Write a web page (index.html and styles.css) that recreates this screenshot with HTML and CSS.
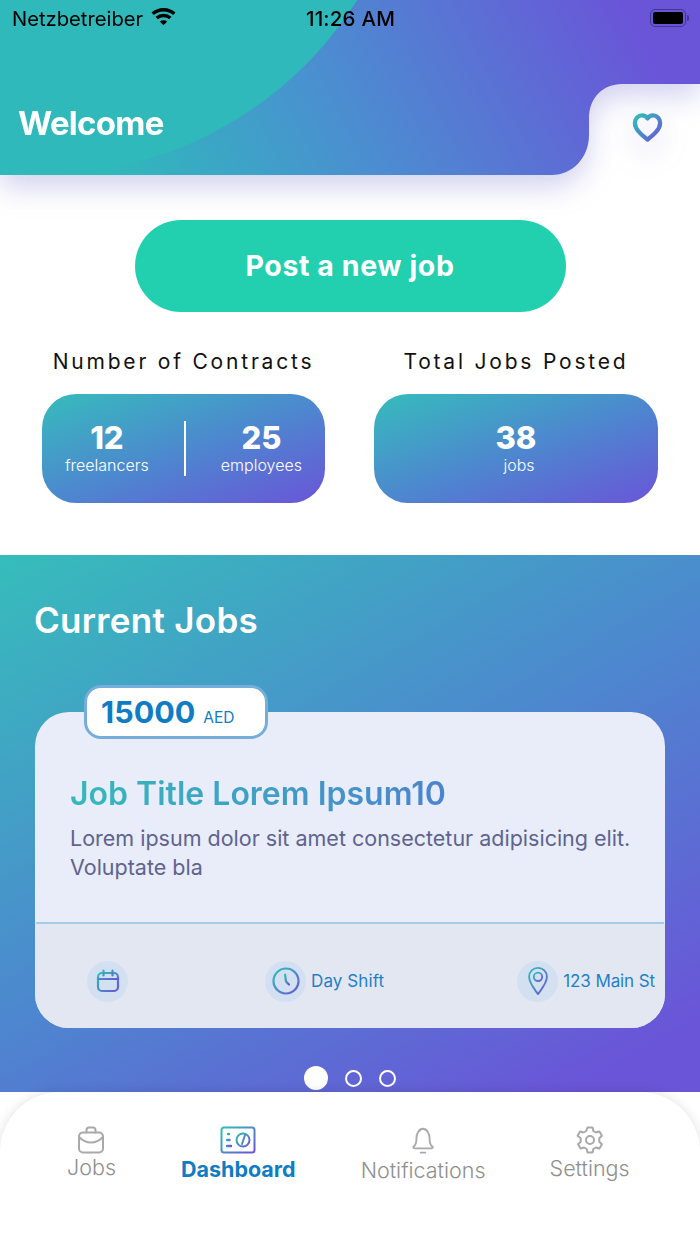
FILE: index.html
```html
<!DOCTYPE html>
<html lang="en">
<head>
<meta charset="utf-8">
<title>Dashboard</title>
<link rel="stylesheet" href="styles.css">
</head>
<body>
<svg class="defs" width="0" height="0" aria-hidden="true">
  <defs>
    <linearGradient id="brand" x1="0" y1="0" x2="1" y2="1">
      <stop offset="0" stop-color="#2fc0b8"/>
      <stop offset="1" stop-color="#6a55d8"/>
    </linearGradient>
  </defs>
</svg>
<div class="app">
  <div class="header-wrap">
    <header class="header">
      <div class="header-blob"></div>
      <div class="status">
        <div class="carrier">
          <span>Netzbetreiber</span>
          <svg class="wifi" viewBox="0 0 26 20" fill="none" stroke="#000" stroke-width="3.6" stroke-linecap="butt">
            <path d="M1.6 7.2C8 1.4 18 1.4 24.4 7.2"/>
            <path d="M5.8 11.6C9.8 8 16.2 8 20.2 11.6"/>
            <path d="M13 19.2l-3.9-3.9c2.2-1.8 5.6-1.8 7.8 0z" fill="#000" stroke="none"/>
          </svg>
        </div>
        <div class="clock">11:26 AM</div>
        <div class="battery-row">
          <div class="battery"><div class="battery-level"></div></div>
          <div class="battery-nub"></div>
        </div>
      </div>
      <h1 class="welcome">Welcome</h1>
    </header>
    <div class="fav">
      <svg class="heart" viewBox="0 0 32 32" fill="none" stroke="url(#brand)" stroke-width="4.4" stroke-linejoin="round">
        <path d="M16 28.5C9.5 23.2 3 18 3 11.3 3 6.6 6.5 3.5 10.3 3.5c2.5 0 4.4 1.1 5.7 3.2 1.3-2.1 3.2-3.2 5.7-3.2C25.500 3.500 29 6.600 29 11.300 29 18 22.500 23.200 16 28.500Z"/>
      </svg>
    </div>
  </div>

  <main class="summary">
    <button class="post-btn" type="button">Post a new job</button>
    <div class="stats">
      <div class="stat">
        <div class="stat-title">Number of Contracts</div>
        <div class="stat-card">
          <div class="metric"><b>12</b><span>freelancers</span></div>
          <div class="stat-rule"></div>
          <div class="metric"><b>25</b><span>employees</span></div>
        </div>
      </div>
      <div class="stat">
        <div class="stat-title">Total Jobs Posted</div>
        <div class="stat-card stat-card-single">
          <div class="metric"><b>38</b><span class="jobs-unit">jobs</span></div>
        </div>
      </div>
    </div>
  </main>

  <section class="jobs">
    <h2 class="jobs-title">Current Jobs</h2>
    <article class="job-card">
      <div class="price"><b>15000</b><span>AED</span></div>
      <div class="job-body">
        <h3 class="job-title">Job Title Lorem Ipsum10</h3>
        <p class="job-desc">Lorem ipsum dolor sit amet consectetur adipisicing elit. Voluptate bla</p>
      </div>
      <div class="job-rule"></div>
      <div class="job-foot">
        <div class="foot-item">
          <span class="foot-icon">
            <svg viewBox="0 0 26 26" fill="none" stroke="url(#brand)" stroke-width="2.2" stroke-linecap="round" stroke-linejoin="round" class="icon-cal">
              <rect x="3" y="5" width="20" height="18" rx="4"/><path d="M3 11h20M8.500 2.500v5M17.500 2.500v5"/>
            </svg>
          </span>
        </div>
        <div class="foot-item foot-item-shift">
          <span class="foot-icon">
            <svg viewBox="0 0 30 30" fill="none" stroke="url(#brand)" stroke-width="2.200" stroke-linecap="round" stroke-linejoin="round" class="icon-lg">
              <circle cx="15" cy="15" r="12.500"/><path d="M14 8.500l1 7 3 3"/>
            </svg>
          </span>
          <span class="foot-text">Day Shift</span>
        </div>
        <div class="foot-item">
          <span class="foot-icon">
            <svg viewBox="0 0 24 32" fill="none" stroke="url(#brand)" stroke-width="2" stroke-linejoin="round" class="icon-lg">
              <path d="M12 30C7 23 2.500 18 2.500 11.500 2.500 6 6.800 2 12 2s9.500 4 9.500 9.500C21.500 18 17 23 12 30Z"/><circle cx="12" cy="11.500" r="4.500"/>
            </svg>
          </span>
          <span class="foot-text foot-text-addr">123 Main St</span>
        </div>
      </div>
    </article>
    <div class="dots">
      <span class="dot dot-active"></span>
      <span class="dot"></span>
      <span class="dot"></span>
    </div>
  </section>

  <nav class="tabbar">
    <a class="tab">
      <svg class="tab-icon" viewBox="0 0 28 28" fill="none" stroke="#a9a9a9" stroke-width="2" stroke-linejoin="round" stroke-linecap="round">
        <rect x="2" y="6.500" width="24" height="20" rx="4"/><path d="M9.500 6.500V4c0-1.500 1-2.500 2.500-2.500h4c1.500 0 2.500 1 2.500 2.500v2.500M2 11c4 4 8 5.500 12 5.500S22 15 26 11"/>
      </svg>
      <span class="tab-label">Jobs</span>
    </a>
    <a class="tab tab-active">
      <svg class="tab-icon tab-icon-wide" viewBox="0 0 36 28" fill="none" stroke="url(#brand)" stroke-width="2" stroke-linecap="round">
        <rect x="1.500" y="1.500" width="33" height="25" rx="2.500"/>
        <circle cx="23" cy="14" r="6.500"/><path d="M25 9l-3 9"/>
        <path d="M8 8h1M7 14h2.500M7 20h4" stroke-width="2.400"/>
      </svg>
      <span class="tab-label">Dashboard</span>
    </a>
    <a class="tab tab-notif">
      <svg class="tab-icon" viewBox="0 0 28 30" fill="none" stroke="#a9a9a9" stroke-width="2" stroke-linejoin="round" stroke-linecap="round">
        <path d="M4 22c3-2 3-5 3-9 0-5 3-10 7-10s7 5 7 10c0 4 0 7 3 9 1 1 0 2-1 2H5c-1 0-2-1-1-2Z"/><path d="M11.500 28.500h5"/>
      </svg>
      <span class="tab-label">Notifications</span>
    </a>
    <a class="tab tab-settings">
      <svg class="tab-icon" viewBox="0 0 28 28" fill="none" stroke="#a9a9a9" stroke-width="2" stroke-linejoin="round">
        <path d="M11.500 1.500h5l.8 3.500 2.600 1.500 3.500-1 2.500 4.300-2.600 2.500v3.400l2.600 2.500-2.500 4.300-3.500-1-2.600 1.500-.8 3.500h-5l-.8-3.500-2.600-1.500-3.500 1-2.500-4.300 2.600-2.500v-3.400L1.600 9.800l2.500-4.300 3.500 1 2.600-1.500z"/>
        <circle cx="14" cy="14" r="4"/>
      </svg>
      <span class="tab-label">Settings</span>
    </a>
  </nav>
</div>
</body>
</html>
```
FILE: styles.css
```css
* { box-sizing: border-box; }
html, body { margin: 0; padding: 0; background: #fff; }
body { font-family: "Inter", "Noto Sans", sans-serif; overflow: hidden; }
.defs { position: absolute; }

.app {
  width: 700px;
  height: 1244px;
  display: flex;
  flex-direction: column;
  overflow: hidden;
  background: #fff;
}

/* header */
.header-wrap {
  position: relative;
  height: 175px;
  flex: none;
  filter: drop-shadow(0 12px 14px rgba(92, 92, 200, 0.28));
}
.header {
  position: relative;
  height: 175px;
  overflow: hidden;
  background: linear-gradient(62deg, #2fb9bb 14%, #4a90d0 46%, #6a55d8 90%);
  clip-path: path("M0 0H700V84H622C603 84 589 98 589 118V135C589 158 572 175 552 175H0Z");
}
.header-blob {
  position: absolute;
  left: -335px;
  top: -575px;
  width: 750px;
  height: 750px;
  border-radius: 50%;
  background: #2fb9bb;
}
.status {
  position: relative;
  display: grid;
  grid-template-columns: 1fr auto 1fr;
  align-items: center;
  height: 36px;
  padding: 0 11px 0 12px;
  font-size: 20.200px;
  color: #000;
}
.carrier { display: flex; align-items: center; gap: 8px; }
.wifi { width: 25px; height: 19px; margin-top: -3px; }
.clock { font-weight: 500; font-size: 20.500px; letter-spacing: .2px; }
.battery-row { display: flex; align-items: center; justify-content: flex-end; gap: 1px; }
.battery {
  width: 36px;
  height: 18px;
  padding: 2px;
  border: 1.500px solid #3b3a8c;
  border-radius: 5px;
}
.battery-level { height: 100%; background: #000; border-radius: 2px; }
.battery-nub { width: 2px; height: 6px; background: #3b3a8c; border-radius: 0 2px 2px 0; }
.welcome {
  position: relative;
  margin: 67px 0 0 18px;
  font-size: 33px;
  line-height: 40px;
  font-weight: 700;
  letter-spacing: -0.700px;
  color: #fff;
}
.fav {
  position: absolute;
  left: 632px;
  top: 112px;
  width: 31px;
  height: 31px;
}
.heart { display: block; width: 31px; height: 31px; }

/* summary */
.summary { flex: none; height: 380px; padding-top: 45px; }
.post-btn {
  display: block;
  width: 431px;
  height: 92px;
  margin: 0 auto;
  border: 0;
  border-radius: 46px;
  background: #22d0b0;
  color: #fff;
  font: 700 28.500px/1 "Inter", sans-serif;
  letter-spacing: .6px;
}
.stats {
  display: grid;
  grid-template-columns: 283px 284px;
  gap: 49px;
  margin-top: 34px;
  padding-left: 42px;
}
.stat-title {
  height: 32px;
  margin-bottom: 16px;
  text-align: center;
  font-size: 21px;
  line-height: 32px;
  letter-spacing: 2.800px;
  color: #111;
}
.stat-card {
  position: relative;
  height: 109px;
  display: flex;
  align-items: center;
  justify-content: space-between;
  padding: 0 23px 2px;
  border-radius: 34px;
  background: linear-gradient(160deg, #36bcbc 0%, #4d87cf 52%, #6a55d8 100%);
  color: #fff;
}
.stat-card-single { justify-content: center; }
.metric {
  display: flex;
  flex-direction: column;
  align-items: center;
}
.metric b { font-size: 31px; line-height: 34px; font-weight: 800; }
.metric span { font-size: 16px; line-height: 20px; font-weight: 300; }
.jobs-unit { margin-left: 6px; }
.stat-rule { width: 2px; height: 55px; margin-top: 2px; background: #fff; }

/* jobs */
.jobs {
  flex: none;
  height: 537px;
  padding: 43px 35px 0;
  background: linear-gradient(150deg, #36bdbb 0%, #4d87cf 50%, #6a55d8 92%);
}
.jobs-title {
  margin: 0 0 0 -1px;
  font-size: 35px;
  line-height: 44px;
  font-weight: 600;
  letter-spacing: .3px;
  color: #fff;
}
.job-card {
  position: relative;
  height: 316px;
  margin-top: 70px;
  border-radius: 34px;
  background: #e8edf9;
}
.price {
  position: absolute;
  left: 49px;
  top: -27px;
  width: 184px;
  height: 54px;
  display: flex;
  align-items: baseline;
  gap: 8px;
  padding: 5px 0 0 14px;
  background: #fff;
  border: 3px solid #75addb;
  border-radius: 17px;
  color: #0f7cc4;
}
.price b { font-size: 30.500px; line-height: 38px; font-weight: 700; }
.price span { font-size: 15.500px; }
.job-body { height: 210px; padding: 62px 20px 0 35px; }
.job-title {
  display: inline-block;
  margin: 0;
  font-size: 32px;
  line-height: 40px;
  font-weight: 600;
  background: linear-gradient(90deg, #35b9bb, #4b84cf);
  -webkit-background-clip: text;
  background-clip: text;
  color: transparent;
}
.job-desc {
  margin: 10px 0 0;
  font-size: 21.500px;
  line-height: 29px;
  color: #5f6390;
}
.job-rule { height: 2px; margin: 0 1px; background: #a6cbe9; }
.job-foot {
  height: 104px;
  display: flex;
  align-items: center;
  justify-content: space-between;
  padding: 10px 10px 0 52px;
  border-radius: 0 0 34px 34px;
  background: #e3e7f2;
}
.foot-item { display: flex; align-items: center; gap: 5px; }
.foot-item-shift { margin-left: 4px; }
.foot-icon {
  width: 41px;
  height: 41px;
  display: flex;
  align-items: center;
  justify-content: center;
  border-radius: 50%;
  background: #d3e0f1;
}
.foot-icon .icon-cal { width: 26px; height: 26px; }
.foot-icon .icon-lg { width: 30px; height: 30px; }
.foot-text { font-size: 17px; letter-spacing: .1px; color: #1f80c8; }
.foot-text-addr { letter-spacing: -.1px; }

.dots {
  display: flex;
  align-items: center;
  justify-content: center;
  gap: 17px;
  margin-top: 38px;
}
.dot {
  width: 17px;
  height: 17px;
  border: 2px solid #fff;
  border-radius: 50%;
}
.dot-active { width: 24px; height: 24px; background: #fff; }

/* tab bar */
.tabbar {
  position: relative;
  flex: 1;
  display: flex;
  justify-content: flex-start;
  align-items: flex-start;
  gap: 65px;
  padding: 34px 0 0 67px;
  background: #fff;
  border-radius: 60px 60px 0 0;
  box-shadow: 0 0 12px rgba(0, 0, 0, .12);
}
.tab {
  display: flex;
  flex-direction: column;
  align-items: center;
  color: #8f8f8f;
}
.tab-icon { display: block; width: 28px; height: 28px; }
.tab-icon-wide { width: 36px; }
.tab-label { font-size: 21.500px; line-height: 26px; font-weight: 300; }
.tab-active { color: #0f7cc4; }
.tab-active .tab-label { font-weight: 700; margin-top: 2px; }
.tab-notif .tab-label { margin-top: 3px; }
.tab-settings { margin-left: -1px; }
.tab-settings .tab-label { margin-top: 1px; }
```
